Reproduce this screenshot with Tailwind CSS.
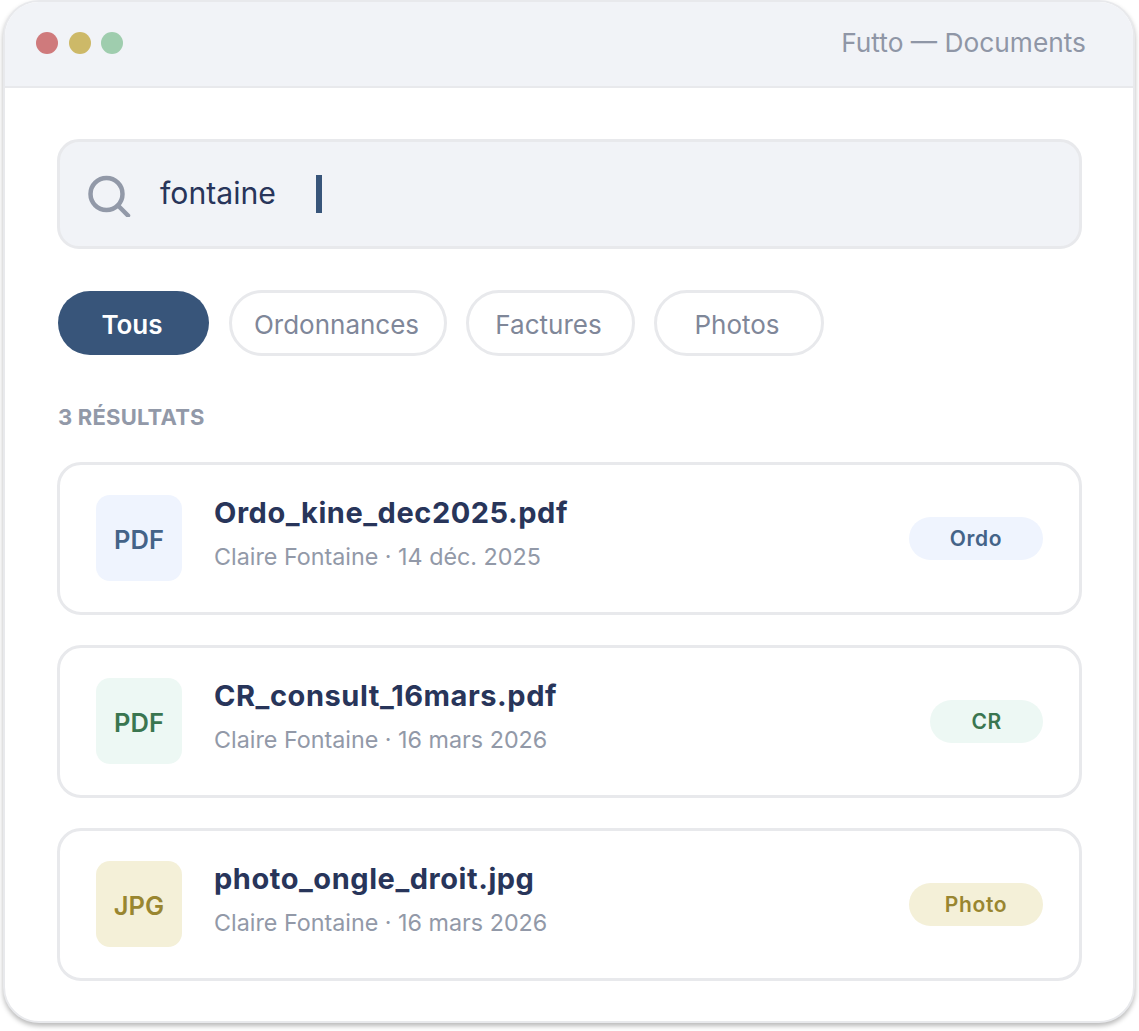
<!DOCTYPE html>
<html lang="fr">
<head>
  <meta charset="UTF-8" />
  <meta name="viewport" content="width=device-width, initial-scale=1.0">
  <title>Futto — Documents</title>
  <script src="https://cdn.jsdelivr.net/npm/@tailwindcss/browser@4"></script>
</head>
<body class="bg-white min-h-[1031px] font-['Inter',sans-serif]">
  <div class="ml-[3px] w-[1132px] h-[1023px] bg-white border-2 border-[#e8e9ec] rounded-[36px] overflow-hidden shadow-[0_3px_5px_rgba(0,0,0,0.28)]">
    <!-- barre de titre -->
    <div class="h-[86px] pb-[2px] bg-[#f1f3f7] border-b-2 border-[#e8e9ec] flex items-center justify-between pl-[31px] pr-[47px]">
      <div class="flex gap-[10.5px]">
        <span class="w-[22px] h-[22px] rounded-full bg-[#cf7a7c]"></span>
        <span class="w-[22px] h-[22px] rounded-full bg-[#cdb968]"></span>
        <span class="w-[22px] h-[22px] rounded-full bg-[#9fcdae]"></span>
      </div>
      <span class="text-[26.3px] text-[#8f96a6]">Futto — Documents</span>
    </div>

    <div class="pt-[51px] pl-[52px] pr-[51px]">
      <!-- recherche -->
      <div class="h-[110px] bg-[#f1f3f7] border-[3px] border-[#e8e9ec] rounded-[22px] flex items-center pl-[27px]">
        <svg class="w-[46px] h-[46px] shrink-0" viewBox="0 0 46 46" fill="none" stroke="#9299a8" stroke-width="4.500" stroke-linecap="round">
          <circle cx="19.500" cy="23" r="16"></circle>
          <path d="M31 34.500l10 10"></path>
        </svg>
        <span class="ml-[27px] text-[30.2px] text-[#28355a]">fontaine</span>
        <span class="ml-[40px] w-[6px] h-[38px] bg-[#38557a]"></span>
      </div>

      <!-- filtres -->
      <div class="mt-[41px] flex items-center gap-[19px]">
        <span class="w-[151px] h-[64px] ml-px mr-px pt-[3px] pr-[3px] rounded-full bg-[#38557a] text-white text-[26px] font-semibold flex items-center justify-center">Tous</span>
        <span class="w-[218px] h-[66px] pt-[3px] pr-[3px] rounded-full border-[3px] border-[#e8e9ec] text-[#7f8799] text-[26px] flex items-center justify-center">Ordonnances</span>
        <span class="w-[169px] h-[66px] pt-[3px] pr-[4px] rounded-full border-[3px] border-[#e8e9ec] text-[#7f8799] text-[26px] flex items-center justify-center">Factures</span>
        <span class="w-[170px] h-[66px] pt-[3px] pr-[4px] rounded-full border-[3px] border-[#e8e9ec] text-[#7f8799] text-[26px] flex items-center justify-center">Photos</span>
      </div>

      <p class="mt-[47px] ml-px text-[22px] leading-[28px] tracking-[0.2px] font-bold text-[#9299a8]">3 RÉSULTATS</p>

      <!-- resultats -->
      <div class="mt-[31px] flex flex-col gap-[30px]">
        <div class="h-[153px] border-[3px] border-[#e8e9ec] rounded-[24px] flex items-center pl-[36px] pr-[36px]">
          <div class="w-[86px] h-[86px] mb-px pt-[5px] rounded-[14px] bg-[#eff4fe] text-[#446388] text-[25.500px] font-semibold flex items-center justify-center">PDF</div>
          <div class="ml-[32px] pb-[10px] flex-1">
            <p class="text-[29px] leading-[36px] tracking-[0.55px] font-bold text-[#28355a]">Ordo_kine_dec2025.pdf</p>
            <p class="mt-[11px] text-[23.3px] leading-[30px] text-[#9299a8]">Claire Fontaine · 14 déc. 2025</p>
          </div>
          <span class="w-[134px] h-[43px] rounded-full bg-[#eff4fe] text-[#446388] text-[21px] tracking-[0.7px] font-semibold flex items-center justify-center">Ordo</span>
        </div>

        <div class="h-[153px] border-[3px] border-[#e8e9ec] rounded-[24px] flex items-center pl-[36px] pr-[36px]">
          <div class="w-[86px] h-[86px] mb-px pt-[5px] rounded-[14px] bg-[#edf8f4] text-[#3a7650] text-[25.500px] font-semibold flex items-center justify-center">PDF</div>
          <div class="ml-[32px] pb-[10px] flex-1">
            <p class="text-[29px] leading-[36px] tracking-[0.55px] font-bold text-[#28355a]">CR_consult_16mars.pdf</p>
            <p class="mt-[11px] text-[23.3px] leading-[30px] text-[#9299a8]">Claire Fontaine · 16 mars 2026</p>
          </div>
          <span class="w-[113px] h-[43px] rounded-full bg-[#edf8f4] text-[#3a7650] text-[21px] tracking-[0.3px] font-semibold flex items-center justify-center">CR</span>
        </div>

        <div class="h-[153px] border-[3px] border-[#e8e9ec] rounded-[24px] flex items-center pl-[36px] pr-[36px]">
          <div class="w-[86px] h-[86px] mb-px pt-[5px] rounded-[14px] bg-[#f4f0d8] text-[#998630] text-[25.500px] font-semibold flex items-center justify-center">JPG</div>
          <div class="ml-[32px] pb-[10px] flex-1">
            <p class="text-[29px] leading-[36px] tracking-[0.55px] font-bold text-[#28355a]">photo_ongle_droit.jpg</p>
            <p class="mt-[11px] text-[23.3px] leading-[30px] text-[#9299a8]">Claire Fontaine · 16 mars 2026</p>
          </div>
          <span class="w-[134px] h-[43px] rounded-full bg-[#f4f0d8] text-[#998630] text-[21px] tracking-[0.7px] font-semibold flex items-center justify-center">Photo</span>
        </div>
      </div>
    </div>
  </div>
</body>
</html>
